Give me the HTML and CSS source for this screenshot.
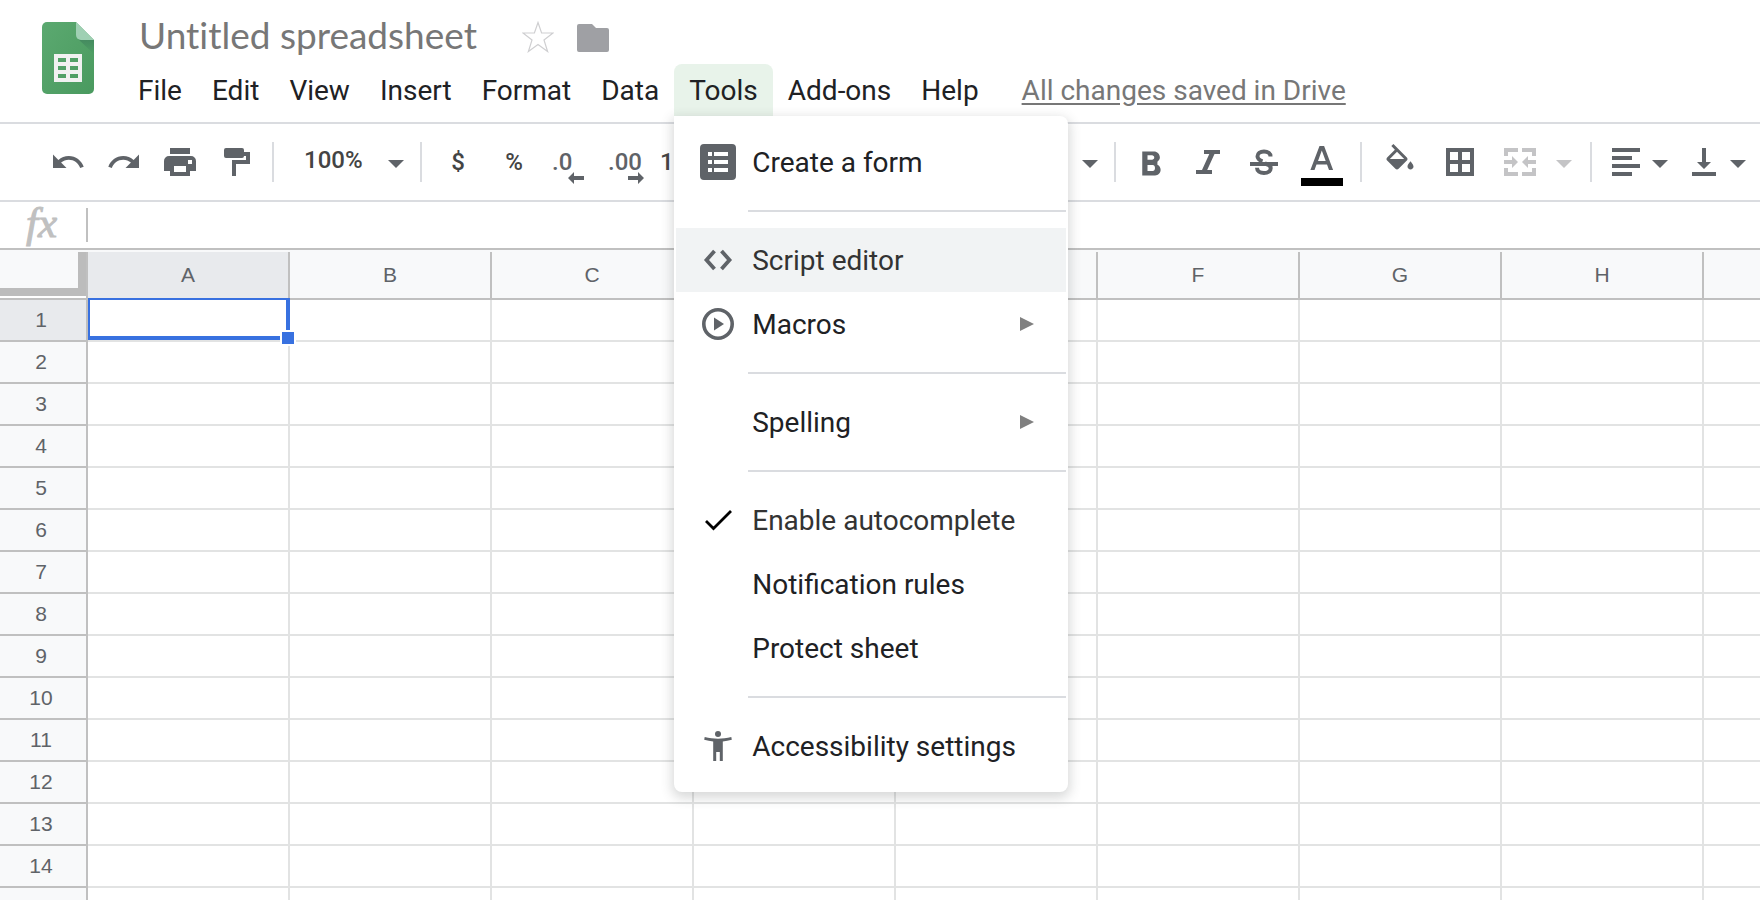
FILE: index.html
```html
<!DOCTYPE html>
<html lang="en">
<head>
<meta charset="utf-8">
<title>Untitled spreadsheet</title>
<link rel="stylesheet" href="styles.css">
</head>
<body>
<header class="header">
  <svg class="logo" viewBox="0 0 52 72" aria-label="Sheets">
    <defs>
      <linearGradient id="page" x1="0" y1="0" x2="1" y2="1"><stop offset="0" stop-color="#5ba970"/><stop offset="1" stop-color="#4a9a5f"/></linearGradient>
      <linearGradient id="fold" x1="0" y1="0" x2="0" y2="1"><stop offset="0" stop-color="#44895f"/><stop offset="1" stop-color="#4e9f64"/></linearGradient>
    </defs>
    <path fill="url(#page)" d="M5 0h29l18 18v49a5 5 0 0 1-5 5H5a5 5 0 0 1-5-5V5a5 5 0 0 1 5-5z"/>
    <path fill="url(#fold)" d="M36 17l16 15V18H38z"/>
    <path fill="#9fd0b3" d="M34 0l18 18H39a5 5 0 0 1-5-5z"/>
    <path fill="#f1f1f1" fill-rule="evenodd" d="M12 32h28v28H12zM16 36v4h8v-4zM28 36v4h8v-4zM16 44v4h8v-4zM28 44v4h8v-4zM16 52v4h8v-4zM28 52v4h8v-4z"/>
  </svg>
  <div class="header-main">
    <div class="title-row">
      <input class="doc-title" type="text" value="Untitled spreadsheet" aria-label="Document title">
      <button class="title-icon" aria-label="Star">
        <svg width="32" height="32" viewBox="0 0 32 32"><path fill="none" stroke="#cfcfd1" stroke-width="1.2" d="M16 1.500l3.600 10.500H31l-9 7 3.600 11.500L16 23.500 6.400 30.500 10 19 1 12h11.400z"/></svg>
      </button>
      <button class="title-icon" aria-label="Move to folder">
        <svg width="32" height="32" viewBox="0 0 32 32"><path fill="#9fa0a4" d="M2 3h13l4 4h11a2 2 0 0 1 2 2v20a2 2 0 0 1-2 2H2a2 2 0 0 1-2-2V5a2 2 0 0 1 2-2z"/></svg>
      </button>
    </div>
    <nav class="menubar">
      <button class="menu">File</button>
      <button class="menu">Edit</button>
      <button class="menu">View</button>
      <button class="menu">Insert</button>
      <button class="menu">Format</button>
      <button class="menu">Data</button>
      <div class="menu-wrap">
        <button class="menu menu-open" aria-expanded="true">Tools</button>
        <div class="popup" role="menu">
          <button class="item" role="menuitem">
            <svg class="item-icon" viewBox="0 0 36 36"><path fill="#5f6368" fill-rule="evenodd" d="M4 0h28a4 4 0 0 1 4 4v28a4 4 0 0 1-4 4H4a4 4 0 0 1-4-4V4a4 4 0 0 1 4-4zM8 8v4h4V8zM14 8v4h14V8zM8 16v4h4v-4zM14 16v4h14v-4zM8 24v4h4v-4zM14 24v4h14v-4z"/></svg>
            <span>Create a form</span>
          </button>
          <hr class="rule">
          <button class="item item-hover" role="menuitem">
            <svg class="item-icon" viewBox="0 0 36 36"><path fill="none" stroke="#5f6368" stroke-width="3.800" d="M14.500 9l-8 9 8 9M21.500 9l8 9-8 9"/></svg>
            <span>Script editor</span>
          </button>
          <button class="item" role="menuitem">
            <svg class="item-icon" viewBox="0 0 36 36"><circle cx="18" cy="18" r="14.200" fill="none" stroke="#5f6368" stroke-width="3.600"/><path fill="#5f6368" d="M14 11.500v13l10-6.500z"/></svg>
            <span>Macros</span>
            <svg class="submenu" viewBox="0 0 14 14"><path fill="#808080" d="M0 0l14 7-14 7z"/></svg>
          </button>
          <hr class="rule">
          <button class="item" role="menuitem">
            <span class="item-icon"></span>
            <span>Spelling</span>
            <svg class="submenu" viewBox="0 0 14 14"><path fill="#808080" d="M0 0l14 7-14 7z"/></svg>
          </button>
          <hr class="rule">
          <button class="item item-checked" role="menuitemcheckbox" aria-checked="true">
            <svg class="item-icon" viewBox="0 0 36 36"><path fill="none" stroke="#000" stroke-width="2.800" d="M6 19l7.500 7.500L31 9"/></svg>
            <span>Enable autocomplete</span>
          </button>
          <button class="item" role="menuitem"><span class="item-icon"></span><span>Notification rules</span></button>
          <button class="item" role="menuitem"><span class="item-icon"></span><span>Protect sheet</span></button>
          <hr class="rule">
          <button class="item" role="menuitem">
            <svg class="item-icon" viewBox="0 0 36 36"><circle cx="18" cy="6" r="3" fill="#5f6368"/><path fill="#5f6368" d="M4.700 9C9 10.300 14 10.700 18 10.700S27 10.300 31.300 9l.5 2.800c-3 .9-6 1.400-9 1.700V33h-3v-9h-3.600v9h-3V13.500c-3-.3-6-.8-9-1.700z"/></svg>
            <span>Accessibility settings</span>
          </button>
        </div>
      </div>
      <button class="menu">Add-ons</button>
      <button class="menu">Help</button>
      <a class="saved" href="#">All changes saved in Drive</a>
    </nav>
  </div>
</header>

<div class="toolbar" role="toolbar">
  <button class="tool" aria-label="Undo"><svg class="tool-icon" viewBox="0 0 24 24"><path d="M12.500 8c-2.650 0-5.050.99-6.900 2.600L2 7v9h9l-3.620-3.620c1.390-1.160 3.160-1.880 5.120-1.880 3.540 0 6.550 2.310 7.600 5.500l2.370-.78C21.080 11.030 17.150 8 12.500 8z"/></svg></button>
  <button class="tool" aria-label="Redo"><svg class="tool-icon" viewBox="0 0 24 24"><path d="M18.400 10.600C16.550 8.990 14.150 8 11.500 8c-4.650 0-8.580 3.030-9.960 7.220L3.900 16c1.050-3.190 4.050-5.500 7.600-5.500 1.950 0 3.730.72 5.120 1.880L13 16h9V7l-3.600 3.600z"/></svg></button>
  <button class="tool" aria-label="Print"><svg class="tool-icon" viewBox="0 0 36 36"><path fill-rule="evenodd" d="M8 4h20v6H8zM7 12h22a5 5 0 0 1 5 5v10h-6v5H8v-5H2V17a5 5 0 0 1 5-5zM12 22v6h12v-6zM26 16v4h4v-4z"/></svg></button>
  <button class="tool" aria-label="Paint format"><svg class="tool-icon" viewBox="0 0 36 36"><path d="M8 4h16a2 2 0 0 1 2 2v2h6v12H18v12h-4V16h14v-4h-2a2 2 0 0 1-2 2H8a2 2 0 0 1-2-2V6a2 2 0 0 1 2-2z"/></svg></button>
  <span class="divider"></span>
  <label class="zoom"><select class="zoom-select" aria-label="Zoom"><option>100%</option></select><svg class="caret" viewBox="0 0 16 8"><path d="M0 0h16l-8 8z"/></svg></label>
  <span class="divider"></span>
  <button class="tool tool-text">$</button>
  <button class="tool tool-text">%</button>
  <button class="tool tool-decimal" aria-label="Decrease decimal places">.0<svg class="decimal-arrow" viewBox="0 0 16 12"><path d="M0 6l6-6v4h10v4H6v4z"/></svg></button>
  <button class="tool tool-decimal" aria-label="Increase decimal places">.00<svg class="decimal-arrow decimal-more" viewBox="0 0 16 12"><path d="M16 6l-6-6v4H0v4h10v4z"/></svg></button>
  <button class="tool tool-format">123</button>
  <span class="divider"></span>
  <button class="tool tool-size" aria-label="Font size"><svg class="caret" viewBox="0 0 16 8"><path d="M0 0h16l-8 8z"/></svg></button>
  <span class="divider"></span>
  <button class="tool" aria-label="Bold"><svg class="tool-icon" viewBox="0 0 24 24"><path d="M15.600 11.790c.97-.67 1.650-1.770 1.650-2.790 0-2.260-1.750-4-4-4H5.500v16h8.540c2.090 0 3.710-1.700 3.710-3.790 0-1.520-.86-2.820-2.150-3.420zM9 7.500h3c.83 0 1.500.67 1.500 1.500s-.67 1.500-1.500 1.500H9v-3zm3.500 10.500H9v-4h3.500c.83 0 1.500.67 1.500 2s-.67 2-1.500 2z"/></svg></button>
  <button class="tool" aria-label="Italic"><svg class="tool-icon" viewBox="0 0 36 36"><path d="M14 6h16v4h-5.500l-7.300 16H22v4H6v-4h6l7.300-16H14z"/></svg></button>
  <button class="tool" aria-label="Strikethrough"><svg class="tool-icon" viewBox="0 0 36 36"><path fill="none" stroke="#5f6368" stroke-width="4" d="M24.500 12.500c0-3-2.500-5-6.500-5s-6.500 2-6.500 4.800c0 2.500 2 4 5 5M19 19.500c3.500 1 5.700 2.300 5.700 4.700 0 3-2.700 4.800-6.700 4.800s-7-2-7-5.200"/><path d="M4 18h28v4H4z"/></svg></button>
  <button class="tool tool-wide" aria-label="Text color"><svg class="color-icon" viewBox="0 0 42 40"><path fill-rule="evenodd" d="M18.500 0h4.600l9 24H28l-2-5.500H15.500L13.500 24H9.400zM20.800 4.500L17 15h7.700z"/><path fill="#000" d="M0 32h42v8H0z"/></svg></button>
  <span class="divider"></span>
  <button class="tool tool-wide" aria-label="Fill color"><svg class="tool-icon" viewBox="0 0 24 24"><path d="M16.560 8.940L7.620 0 6.210 1.410l2.380 2.380-5.150 5.150c-.59.59-.59 1.540 0 2.120l5.500 5.500c.29.29.68.44 1.060.44s.77-.15 1.060-.44l5.500-5.500c.59-.58.59-1.530 0-2.120zM5.210 10L10 5.210 14.790 10H5.210zM19 11.500s-2 2.170-2 3.500c0 1.100.9 2 2 2s2-.9 2-2c0-1.330-2-3.500-2-3.500z"/></svg></button>
  <button class="tool tool-wide" aria-label="Borders"><svg class="tool-icon" viewBox="0 0 36 36"><path fill-rule="evenodd" d="M4 4h28v28H4zM8 8v8h8V8zM20 8v8h8V8zM8 20v8h8v-8zM20 20v8h8v-8z"/></svg></button>
  <button class="tool tool-menu tool-merge" aria-label="Merge cells" disabled><svg class="merge-icon" viewBox="0 0 32 28"><path d="M0 0h14v4H4v4H0zM18 0h14v8h-4V4H18zM0 20h4v4h10v4H0zM28 20h4v8H18v-4h10zM0 12h8V8l6 6-6 6v-4H0zM32 12h-8V8l-6 6 6 6v-4h8z"/></svg><svg class="caret" viewBox="0 0 16 8"><path d="M0 0h16l-8 8z"/></svg></button>
  <span class="divider"></span>
  <button class="tool tool-menu tool-align" aria-label="Horizontal align"><svg class="align-icon" viewBox="0 0 28 28"><path d="M0 0h28v4H0zM0 8h20v4H0zM0 16h28v4H0zM0 24h20v4H0z"/></svg><svg class="caret" viewBox="0 0 16 8"><path d="M0 0h16l-8 8z"/></svg></button>
  <button class="tool tool-menu tool-valign" aria-label="Vertical align"><svg class="valign-icon" viewBox="0 0 24 28"><path d="M10 0h4v14h5l-7 7-7-7h5zM0 24h24v4H0z"/></svg><svg class="caret" viewBox="0 0 16 8"><path d="M0 0h16l-8 8z"/></svg></button>
</div>

<div class="formula-bar">
  <label class="fx" for="formula">fx</label>
  <input class="formula" id="formula" type="text">
</div>

<main class="sheet">
  <table class="grid">
    <thead>
      <tr><th class="corner"></th><th class="active">A</th><th>B</th><th>C</th><th aria-label="D"></th><th aria-label="E"></th><th>F</th><th>G</th><th>H</th><th aria-label="I"></th></tr>
    </thead>
    <tbody>
      <tr><th class="active">1</th><td class="selected"><span class="selection"></span><span class="handle"></span></td><td></td><td></td><td></td><td></td><td></td><td></td><td></td><td></td></tr>
      <tr><th>2</th><td></td><td></td><td></td><td></td><td></td><td></td><td></td><td></td><td></td></tr>
      <tr><th>3</th><td></td><td></td><td></td><td></td><td></td><td></td><td></td><td></td><td></td></tr>
      <tr><th>4</th><td></td><td></td><td></td><td></td><td></td><td></td><td></td><td></td><td></td></tr>
      <tr><th>5</th><td></td><td></td><td></td><td></td><td></td><td></td><td></td><td></td><td></td></tr>
      <tr><th>6</th><td></td><td></td><td></td><td></td><td></td><td></td><td></td><td></td><td></td></tr>
      <tr><th>7</th><td></td><td></td><td></td><td></td><td></td><td></td><td></td><td></td><td></td></tr>
      <tr><th>8</th><td></td><td></td><td></td><td></td><td></td><td></td><td></td><td></td><td></td></tr>
      <tr><th>9</th><td></td><td></td><td></td><td></td><td></td><td></td><td></td><td></td><td></td></tr>
      <tr><th>10</th><td></td><td></td><td></td><td></td><td></td><td></td><td></td><td></td><td></td></tr>
      <tr><th>11</th><td></td><td></td><td></td><td></td><td></td><td></td><td></td><td></td><td></td></tr>
      <tr><th>12</th><td></td><td></td><td></td><td></td><td></td><td></td><td></td><td></td><td></td></tr>
      <tr><th>13</th><td></td><td></td><td></td><td></td><td></td><td></td><td></td><td></td><td></td></tr>
      <tr><th>14</th><td></td><td></td><td></td><td></td><td></td><td></td><td></td><td></td><td></td></tr>
      <tr><th></th><td></td><td></td><td></td><td></td><td></td><td></td><td></td><td></td><td></td></tr>
    </tbody>
  </table>
</main>
</body>
</html>
```

FILE: styles.css
```css
* { box-sizing: border-box; }

body {
  margin: 0;
  height: 100vh;
  display: flex;
  flex-direction: column;
  overflow: hidden;
  background: #fff;
  color: #202124;
  font-family: Roboto, "Liberation Sans", sans-serif;
}

button, input, select {
  font: inherit;
  color: inherit;
  background: none;
  border: 0;
  padding: 0;
  margin: 0;
  outline: 0;
}

svg { display: block; flex: none; }

/* Header */
.header {
  display: flex;
  align-items: flex-start;
  padding: 0 42px 6px;
  border-bottom: 2px solid #dadce0;
}

.logo { width: 52px; height: 72px; margin-top: 22px; }
.header-main { flex: 1; margin-left: 29px; }

.title-row {
  display: flex;
  align-items: center;
  gap: 23px;
  height: 64px;
  padding: 10px 0 0 16px;
}

.doc-title {
  width: 360px;
  height: 48px;
  margin-top: -6px;
  color: #777;
  font-family: Lato, Roboto, sans-serif;
  font-size: 37px;
  font-variant-ligatures: none;
}

.title-icon { display: flex; }

.menubar { display: flex; align-items: center; height: 52px; }

.menu {
  height: 52px;
  padding: 2px 15px 0;
  font-size: 28px;
  line-height: 50px;
  border-radius: 8px 8px 0 0;
  white-space: nowrap;
}

.menu-open { background: #e8f3ea; }
.menu-wrap { position: relative; }

.saved { margin-left: 28px; color: #777; font-size: 28px; white-space: nowrap; text-underline-offset: 3px; }

/* Tools menu */
.popup {
  position: absolute;
  z-index: 10;
  top: 100%;
  left: 0;
  width: 394px;
  padding: 14px 2px;
  background: #fff;
  border-radius: 0 8px 8px 8px;
  box-shadow: 0 4px 12px 2px rgba(60, 64, 67, 0.2);
}

.item {
  display: flex;
  align-items: center;
  gap: 16px;
  width: 100%;
  height: 64px;
  padding: 0 32px 0 24px;
  font-size: 28px;
  text-align: left;
  white-space: nowrap;
}

.item-hover { background: #f1f3f4; }
.item-hover, .item-checked { color: #333; }
.item-icon { flex: none; width: 36px; height: 36px; }
.submenu { width: 14px; height: 14px; margin-left: auto; }

.rule { height: 2px; margin: 16px 0 16px 72px; border: 0; background: #dadce0; }

/* Toolbar */
.toolbar {
  display: flex;
  align-items: center;
  height: 78px;
  padding-left: 40px;
  border-bottom: 2px solid #dadce0;
  color: #444;
  overflow: hidden;
}

.tool, .zoom {
  display: flex;
  flex: none;
  align-items: center;
  justify-content: center;
  width: 56px;
  height: 60px;
  font-size: 24px;
  font-weight: 500;
}

.tool svg, .zoom svg { fill: #5f6368; }
.tool-icon { width: 36px; height: 36px; }
.tool-wide { width: 60px; }
.color-icon { width: 42px; height: 40px; margin-top: 8px; }

.divider { flex: none; width: 2px; height: 40px; margin: 0 8px; background: #dadce0; }

.caret { width: 16px; height: 8px; margin-top: 4px; }

.zoom { width: 130px; justify-content: space-between; padding: 0 8px 0 22px; }
.zoom-select { appearance: none; width: 70px; height: 40px; margin-bottom: 4px; }

.tool-decimal { position: relative; justify-content: flex-start; padding-left: 10px; color: #5f6368; }
.decimal-arrow { position: absolute; right: 14px; bottom: 8px; width: 16px; height: 12px; }
.decimal-more { right: 10px; }

.tool-format { width: 92px; justify-content: flex-start; padding-left: 6px; }
.tool-size { width: 342px; justify-content: flex-end; padding-right: 8px; }

.tool-menu { justify-content: flex-start; }
.tool-merge { width: 92px; gap: 20px; padding-left: 14px; }
.tool-merge svg { fill: #c4c4c6; }
.tool-align { width: 76px; gap: 12px; padding-left: 12px; }
.tool-valign { width: 78px; gap: 14px; padding-left: 16px; }
.merge-icon { width: 32px; height: 28px; }
.align-icon { width: 28px; height: 28px; }
.valign-icon { width: 24px; height: 28px; }

/* Formula bar */
.formula-bar {
  display: flex;
  align-items: center;
  height: 48px;
  border-bottom: 2px solid #c0c0c0;
}

.fx {
  width: 86px;
  padding: 0 0 4px 26px;
  color: #c0c0c0;
  font-family: "Liberation Serif", serif;
  font-size: 43px;
  font-style: italic;
  line-height: 42px;
  -webkit-text-stroke: 1px #c0c0c0;
}

.formula { flex: 1; height: 34px; padding: 0 8px; border-left: 2px solid #c0c0c0; font-size: 24px; }

/* Grid */
.sheet { flex: 1; min-height: 0; overflow: hidden; padding-top: 2px; background: #f8f9fa; }

.grid {
  width: 1906px;
  table-layout: fixed;
  border-spacing: 0;
  background: #fff;
}

.grid th, .grid td { height: 42px; padding: 0; border: solid #e2e3e3; border-width: 0 2px 2px 0; }

.grid th {
  border-color: #c0c0c0;
  background: #f8f9fa;
  color: #5f6368;
  font-family: "Liberation Sans", Arial, sans-serif;
  font-size: 21px;
  font-weight: 400;
}

.grid thead th { height: 48px; }
.grid tbody th { padding-right: 4px; }
.grid .active { background: #e8eaed; }

.grid .corner {
  width: 88px;
  background: linear-gradient(#f8f9fa, #f8f9fa) 0 0 / 78px 36px no-repeat,
    linear-gradient(#bcbcbc, #bcbcbc) 0 0 / 86px 44px no-repeat, #fff;
}

.selected { position: relative; }

.selection {
  position: absolute;
  inset: -2px -2px 0 0;
  border: solid #3871e0;
  border-width: 2px 4px 4px 2px;
}

.handle {
  position: absolute;
  right: -8px;
  bottom: -6px;
  width: 16px;
  height: 16px;
  border: 2px solid #fff;
  background: #3871e0;
}
```
